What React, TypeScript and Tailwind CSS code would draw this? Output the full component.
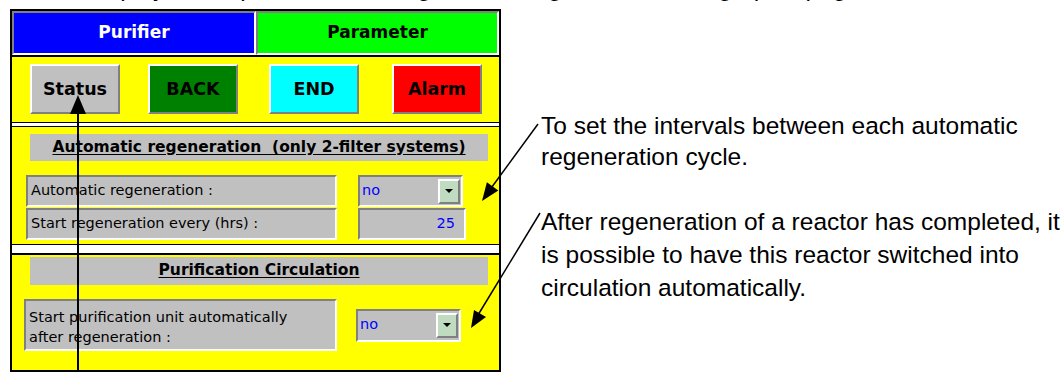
import { memo } from 'react';

const sunken = 'border-2 border-t-[#808080] border-l-[#808080] border-b-white border-r-white';
const raised = 'border-2 border-t-white border-l-white border-b-[#808080] border-r-[#808080]';

const Button = ({ label, color }: { label: string; color: string }) => (
    <div className={`w-[90px] h-[50px] flex items-center justify-center ${raised} ${color}`}>
        <span className="text-[17.5px] font-bold text-black">{label}</span>
    </div>
);

const Field = ({ text, className }: { text: string; className: string }) => (
    <div className={`bg-[#c0c0c0] flex items-center pl-[3px] ${sunken} ${className}`}>
        <span className="text-[14.5px] text-black">{text}</span>
    </div>
);

const Dropdown = memo(({ className }: { className: string }) => (
    <div className={`bg-[#c0c0c0] flex items-center justify-between pl-[2px] pr-[1px] ${sunken} ${className}`}>
        <span className="text-[14.5px] text-[#0000ff]">no</span>
        <div className={`w-[22px] h-[25px] bg-[#c0dcc0] flex items-center justify-center ${raised}`}>
            <div className="w-0 h-0 border-l-[4px] border-r-[4px] border-t-[4px] border-l-transparent border-r-transparent border-t-black" />
        </div>
    </div>
));

const Title = ({ text }: { text: string }) => (
    <div className="ml-[18px] w-[458px] bg-[#c0c0c0] flex items-center justify-center">
        <span className="text-[15.5px] font-bold underline underline-offset-2 whitespace-pre text-black">{text}</span>
    </div>
);

const Arrows = () => (
    <svg className="absolute left-0 top-0 pointer-events-none" width="1060" height="372">
        <line x1="78" y1="110" x2="78" y2="372" stroke="black" strokeWidth="2" />
        <polygon points="78,95 70,114 86,114" fill="black" />
        <line x1="538" y1="124" x2="489" y2="191" stroke="black" strokeWidth="1.5" />
        <polygon points="482,201 498.3,190.5 486.9,182.3" fill="black" />
        <line x1="540" y1="213" x2="478" y2="315" stroke="black" strokeWidth="1.5" />
        <polygon points="471,328 486,317 474,310" fill="black" />
    </svg>
);

export default function App() {
    return (
        <div className="relative w-[1060px] h-[372px] bg-white overflow-hidden font-['Liberation_Sans',Arial,sans-serif]">
            <div className="-mt-[29px] h-[33px] leading-[33px] text-[24.5px] text-black whitespace-nowrap pl-[40px]">
                The display of the parameter settings for the regeneration and graphic page.
            </div>

            <div className="mt-[5px] flex">
                <div className="ml-[10px] w-[491px] h-[363px] border-2 border-black bg-white flex flex-col font-['DejaVu_Sans',sans-serif]">
                    <div className="h-[44px] flex">
                        <div className={`w-[244px] bg-[#0000ff] flex items-center justify-center ${sunken}`}>
                            <span className="text-[17px] font-bold text-white">Purifier</span>
                        </div>
                        <div className={`flex-1 bg-[#00ff00] flex items-center justify-center ${sunken}`}>
                            <span className="text-[17px] font-bold text-black">Parameter</span>
                        </div>
                    </div>

                    <div className="h-[68px] bg-[#ffff00] border-t-2 border-b border-black flex items-start pt-[7px]">
                        <div className="ml-[18px]">
                            <Button label="Status" color="bg-[#c0c0c0]" />
                        </div>
                        <div className="ml-[28px]">
                            <Button label="BACK" color="bg-[#008000]" />
                        </div>
                        <div className="ml-[31px]">
                            <Button label="END" color="bg-[#00ffff]" />
                        </div>
                        <div className="ml-[33px]">
                            <Button label="Alarm" color="bg-[#ff0000]" />
                        </div>
                    </div>

                    <div className="h-[3px]" />

                    <div className="h-[119px] bg-[#ffff00] border-t border-b border-black pt-[7px] flex flex-col">
                        <div className="h-[27px] flex">
                            <Title text="Automatic regeneration  (only 2-filter systems)" />
                        </div>
                        <div className="mt-[14px] flex items-center gap-[21px] pl-[14px]">
                            <Field text="Automatic regeneration :" className="w-[311px] h-[32px]" />
                            <Dropdown className="w-[105px] h-[32px]" />
                        </div>
                        <div className="mt-[1px] flex items-center gap-[21px] pl-[14px]">
                            <Field text="Start regeneration every (hrs) :" className="w-[311px] h-[32px]" />
                            <div className={`w-[108px] h-[32px] bg-[#c0c0c0] flex items-center justify-end pr-[9px] ${sunken}`}>
                                <span className="text-[14.5px] text-[#0000ff]">25</span>
                            </div>
                        </div>
                    </div>

                    <div className="h-[8px]" />

                    <div className="flex-1 bg-[#ffff00] border-t-2 border-black pt-[2px] flex flex-col">
                        <div className="h-[28px] flex">
                            <Title text="Purification Circulation" />
                        </div>
                        <div className="mt-[14px] flex items-center gap-[19px] pl-[12px]">
                            <div className={`w-[313px] h-[52px] bg-[#c0c0c0] pl-[3px] pt-[6px] ${sunken}`}>
                                <div className="text-[14.5px] leading-[20px] text-black">
                                    Start purification unit automatically
                                    <br />
                                    after regeneration :
                                </div>
                            </div>
                            <Dropdown className="w-[105px] h-[33px]" />
                        </div>
                    </div>
                </div>

                <div className="ml-[40px] text-[24.5px] text-black whitespace-nowrap">
                    <div className="mt-[101px] leading-[31px]">
                        To set the intervals between each automatic
                        <br />
                        regeneration cycle.
                    </div>
                    <div className="mt-[33px] leading-[33px]">
                        After regeneration of a reactor has completed, it
                        <br />
                        is possible to have this reactor switched into
                        <br />
                        circulation automatically.
                    </div>
                </div>
            </div>

            <Arrows />
        </div>
    );
}
